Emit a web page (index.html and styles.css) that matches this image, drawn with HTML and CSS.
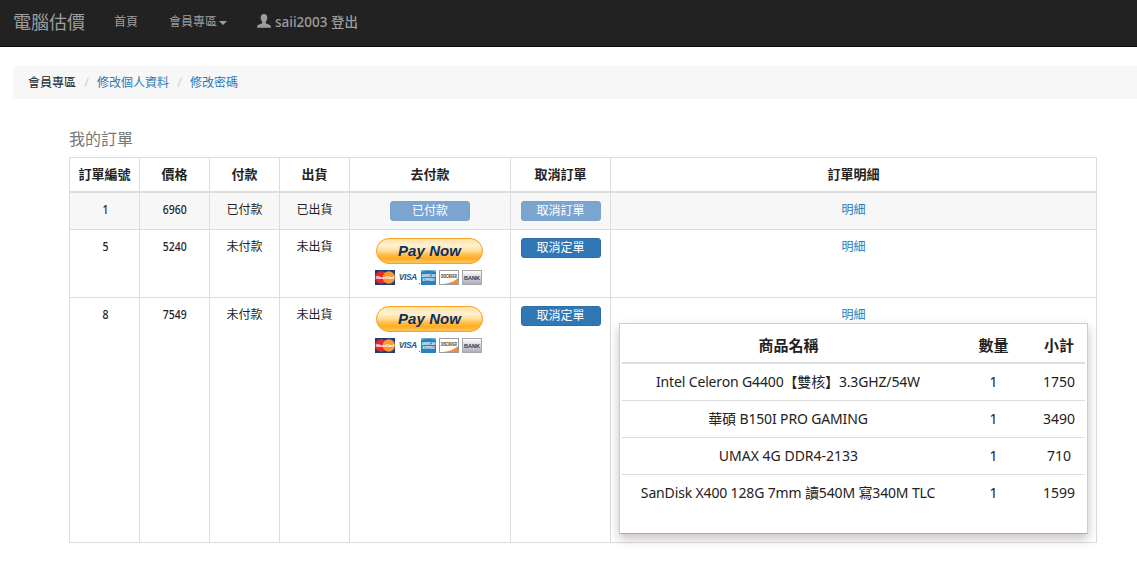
FILE: index.html
```html
<!DOCTYPE html>
<html lang="zh-Hant">
<head>
<meta charset="utf-8">
<title>電腦估價</title>
<link rel="stylesheet" href="styles.css">
</head>
<body>
<svg class="defs" width="0" height="0" aria-hidden="true">
  <defs>
    <linearGradient id="gold" x1="0" y1="0" x2="0" y2="1">
      <stop offset="0" stop-color="#ffe1a6"/><stop offset=".28" stop-color="#fff1d0"/><stop offset=".5" stop-color="#ffdd97"/><stop offset=".62" stop-color="#ffc252"/><stop offset=".8" stop-color="#ffad20"/><stop offset="1" stop-color="#ffc765"/>
    </linearGradient>
    <linearGradient id="bank" x1="0" y1="0" x2="0" y2="1">
      <stop offset="0" stop-color="#fff"/><stop offset="1" stop-color="#a9adb4"/>
    </linearGradient>
    <symbol id="paynow" viewBox="0 0 110 49">
      <rect x="1.5" y=".5" width="106" height="25" rx="12.5" fill="url(#gold)" stroke="#f6a127"/>
      <text x="54.500" y="18" text-anchor="middle" textLength="63" class="pay-label">Pay Now</text>
      <rect x="0" y="32" width="20" height="15" fill="#1d3e72"/>
      <circle cx="6.2" cy="39.5" r="6.2" fill="#e32b2a"/><circle cx="13.8" cy="39.5" r="6.2" fill="#f79a35"/>
      <text x="10" y="41.200" text-anchor="middle" textLength="18" class="mc">MasterCard</text>
      <text x="33" y="42.3" text-anchor="middle" textLength="18.5" class="visa">VISA</text>
      <path d="M24 36.500h3.500l1 2.500z" fill="#f5a623"/>
      <rect x="44" y="45" width="1" height="1" fill="#2e78b7"/>
      <rect x="46" y="32" width="15" height="15" fill="#2d80be"/>
      <path d="M46 34q7-3 15 0v-2H46z" fill="#75b5dc"/>
      <text x="53.5" y="38.8" text-anchor="middle" textLength="13.5" lengthAdjust="spacingAndGlyphs" class="amex">AMERICAN</text>
      <text x="53.5" y="43" text-anchor="middle" textLength="12" lengthAdjust="spacingAndGlyphs" class="amex">EXPRESS</text>
      <rect x="64.5" y="32.5" width="19" height="14" fill="#fff" stroke="#9b9ca1"/>
      <path d="M83 40v6H68q10-1 15-6z" fill="#f28a3a"/>
      <text x="74" y="40" text-anchor="middle" textLength="16" lengthAdjust="spacingAndGlyphs" class="disc">DISCOVER</text>
      <circle cx="75" cy="38.4" r="1.5" fill="#ee7b27"/>
      <rect x="87.5" y="32.5" width="19" height="14" fill="url(#bank)" stroke="#a5a7ac"/>
      <text x="97" y="41.5" text-anchor="middle" textLength="16" class="bank">BANK</text>
    </symbol>
  </defs>
</svg>

<nav class="navbar">
  <a class="brand">電腦估價</a>
  <a class="nav-home">首頁</a>
  <a class="nav-member">會員專區<i class="caret"></i></a>
  <a class="nav-user"><svg width="14" height="14" viewBox="0 0 14 14"><path d="M7 0C4.700 0 3.700 1.500 3.700 3.700c0 1.800.7 3.200 1.600 4.200v1.200C4.800 10.100 .6 10.500 .2 12.200L0 13.700h14l-.2-1.500C13.400 10.500 9.200 10.100 8.700 9.100V7.900c.9-1 1.600-2.400 1.600-4.200C10.300 1.500 9.300 0 7 0z" fill="currentColor"/></svg><span>saii2003 登出</span></a>
</nav>

<ol class="breadcrumb">
  <li>會員專區</li>
  <li class="sep">/</li>
  <li><a>修改個人資料</a></li>
  <li class="sep">/</li>
  <li><a>修改密碼</a></li>
</ol>

<main class="orders">
  <h1>我的訂單</h1>
  <table class="order-table">
    <colgroup><col class="c-s"><col class="c-s"><col class="c-s"><col class="c-s"><col class="c-pay"><col class="c-cancel"><col></colgroup>
    <thead>
      <tr><th>訂單編號</th><th>價格</th><th>付款</th><th>出貨</th><th>去付款</th><th>取消訂單</th><th>訂單明細</th></tr>
    </thead>
    <tbody>
      <tr class="row-paid">
        <td><span class="num">1</span></td><td><span class="num">6960</span></td><td>已付款</td><td>已出貨</td>
        <td><button class="btn off">已付款</button></td><td><button class="btn off">取消訂單</button></td><td><a>明細</a></td>
      </tr>
      <tr class="row-open">
        <td><span class="num">5</span></td><td><span class="num">5240</span></td><td>未付款</td><td>未出貨</td>
        <td><svg class="paynow" width="110" height="49"><use href="#paynow"/></svg></td><td><button class="btn">取消定單</button></td><td><a>明細</a></td>
      </tr>
      <tr class="row-detail">
        <td><span class="num">8</span></td><td><span class="num">7549</span></td><td>未付款</td><td>未出貨</td>
        <td><svg class="paynow" width="110" height="49"><use href="#paynow"/></svg></td><td><button class="btn">取消定單</button></td>
        <td class="detail-cell"><a>明細</a>
          <div class="popup">
            <table class="items">
              <colgroup><col class="i-name"><col class="i-qty"><col></colgroup>
              <thead><tr><th>商品名稱</th><th>數量</th><th>小計</th></tr></thead>
              <tbody>
                <tr><td class="tight">Intel Celeron G4400【雙核】3.3GHZ/54W</td><td>1</td><td>1750</td></tr>
                <tr><td class="tight">華碩 B150I PRO GAMING</td><td>1</td><td>3490</td></tr>
                <tr><td>UMAX 4G DDR4-2133</td><td>1</td><td>710</td></tr>
                <tr><td class="tight">SanDisk X400 128G 7mm 讀540M 寫340M TLC</td><td>1</td><td>1599</td></tr>
              </tbody>
            </table>
          </div>
        </td>
      </tr>
    </tbody>
  </table>
</main>
</body>
</html>
```
FILE: styles.css
```css
* { box-sizing: border-box; }
html, body { height: 570px; overflow: hidden; }
body {
  margin: 0;
  background: #fff;
  color: #222;
  font: 12px/20px "Noto Sans", "Noto Sans CJK TC", sans-serif;
}
a { color: #2d77b5; text-decoration: none; }
.defs { display: block; height: 0; }

.navbar {
  display: flex;
  align-items: center;
  height: 47px;
  padding: 0 0 2px 13px;
  background: #222;
  border-bottom: 1px solid #080808;
}
.navbar a { display: flex; align-items: center; color: #9d9d9d; white-space: nowrap; }
.navbar .brand { width: 101px; font-size: 18px; }
.nav-home { width: 55px; padding-bottom: 1px; }
.nav-member { width: 88px; padding-bottom: 1px; }
.caret {
  margin: 2px 0 0 2px;
  border: 4px solid transparent;
  border-top-color: currentColor;
  border-bottom: 0;
}
.nav-user svg { margin: 0 4px 3px 0; }
.nav-user span { font-size: 13.5px; font-weight: 500; }

.breadcrumb {
  display: flex;
  height: 33px;
  margin: 19px 0 0 13px;
  padding: 7px 15px;
  list-style: none;
  background: #f7f7f7;
  border-radius: 4px 0 0 4px;
}
.breadcrumb .sep { width: 21px; text-align: center; color: #ccc; }

.orders { width: 1028px; margin: 30px 0 0 69px; }
h1 { margin: 0 0 7px; font-size: 16px; line-height: 21px; font-weight: 400; color: #777; }

table { table-layout: fixed; border-collapse: separate; border-spacing: 0; text-align: center; }
th, td { padding: 0; vertical-align: top; }
.order-table { width: 1028px; border: solid #ddd; border-width: 1px 0 0 1px; }
.order-table > * > tr > th, .order-table > * > tr > td { border: solid #ddd; border-width: 0 1px 1px 0; }
.c-s { width: 70px; }
.c-pay { width: 161px; }
.c-cancel { width: 100px; }
.order-table > thead > tr > th { height: 35px; padding-top: 6px; font-size: 13px; border-bottom-width: 2px; }
.order-table > tbody > tr > td { padding-top: 7px; }
.row-paid { height: 37px; background: #f7f7f7; }
.row-open { height: 68px; }
.row-detail { height: 245px; }
.num { display: inline-block; padding-left: 1px; font-weight: 500; transform: scaleX(.87); }
.btn {
  display: block;
  width: 80px;
  height: 20px;
  margin: 1px auto 0;
  padding: 0;
  border: 1px solid #2c6da4;
  border-radius: 3px;
  background: #3077b5;
  color: #fff;
  font: inherit;
  line-height: 18px;
}
.btn.off { background: #7ba5cf; border-color: #79a3cc; }
.paynow { display: block; margin: 1px auto 0; }
.pay-label { font: italic bold 15px "Liberation Sans", sans-serif; fill: #0d2d63; }
.mc { font: italic bold 4px "Liberation Sans", sans-serif; fill: #fff; }
.visa { font: italic bold 8.5px "Liberation Sans", sans-serif; fill: #145a9f; }
.amex { font: bold 4px "Liberation Sans", sans-serif; fill: #fff; }
.disc { font: bold 4.5px "Liberation Sans", sans-serif; fill: #333; }
.bank { font: bold 5.5px "Liberation Sans", sans-serif; fill: #173863; }

.detail-cell { position: relative; }
.popup {
  position: absolute;
  top: 25px;
  left: 8px;
  width: 469px;
  height: 211px;
  padding: 2px;
  background: #fff;
  border: 1px solid #ccc;
  border-bottom-color: #aaa;
  box-shadow: 0 5px 10px rgba(60, 35, 45, .28);
  font-size: 14px;
}
.items { width: 463px; }
.i-name { width: 332px; }
.i-qty { width: 78px; }
.items th { height: 38px; padding: 9px 0 0 1px; font-size: 15px; border-bottom: 2px solid #ddd; }
.items td { height: 37px; padding: 8px 0 0 1px; border-bottom: 1px solid #ddd; white-space: nowrap; }
.items .tight { padding-left: 0; letter-spacing: -.15px; }
.items tbody tr:last-child td { border-bottom: 0; }
```
